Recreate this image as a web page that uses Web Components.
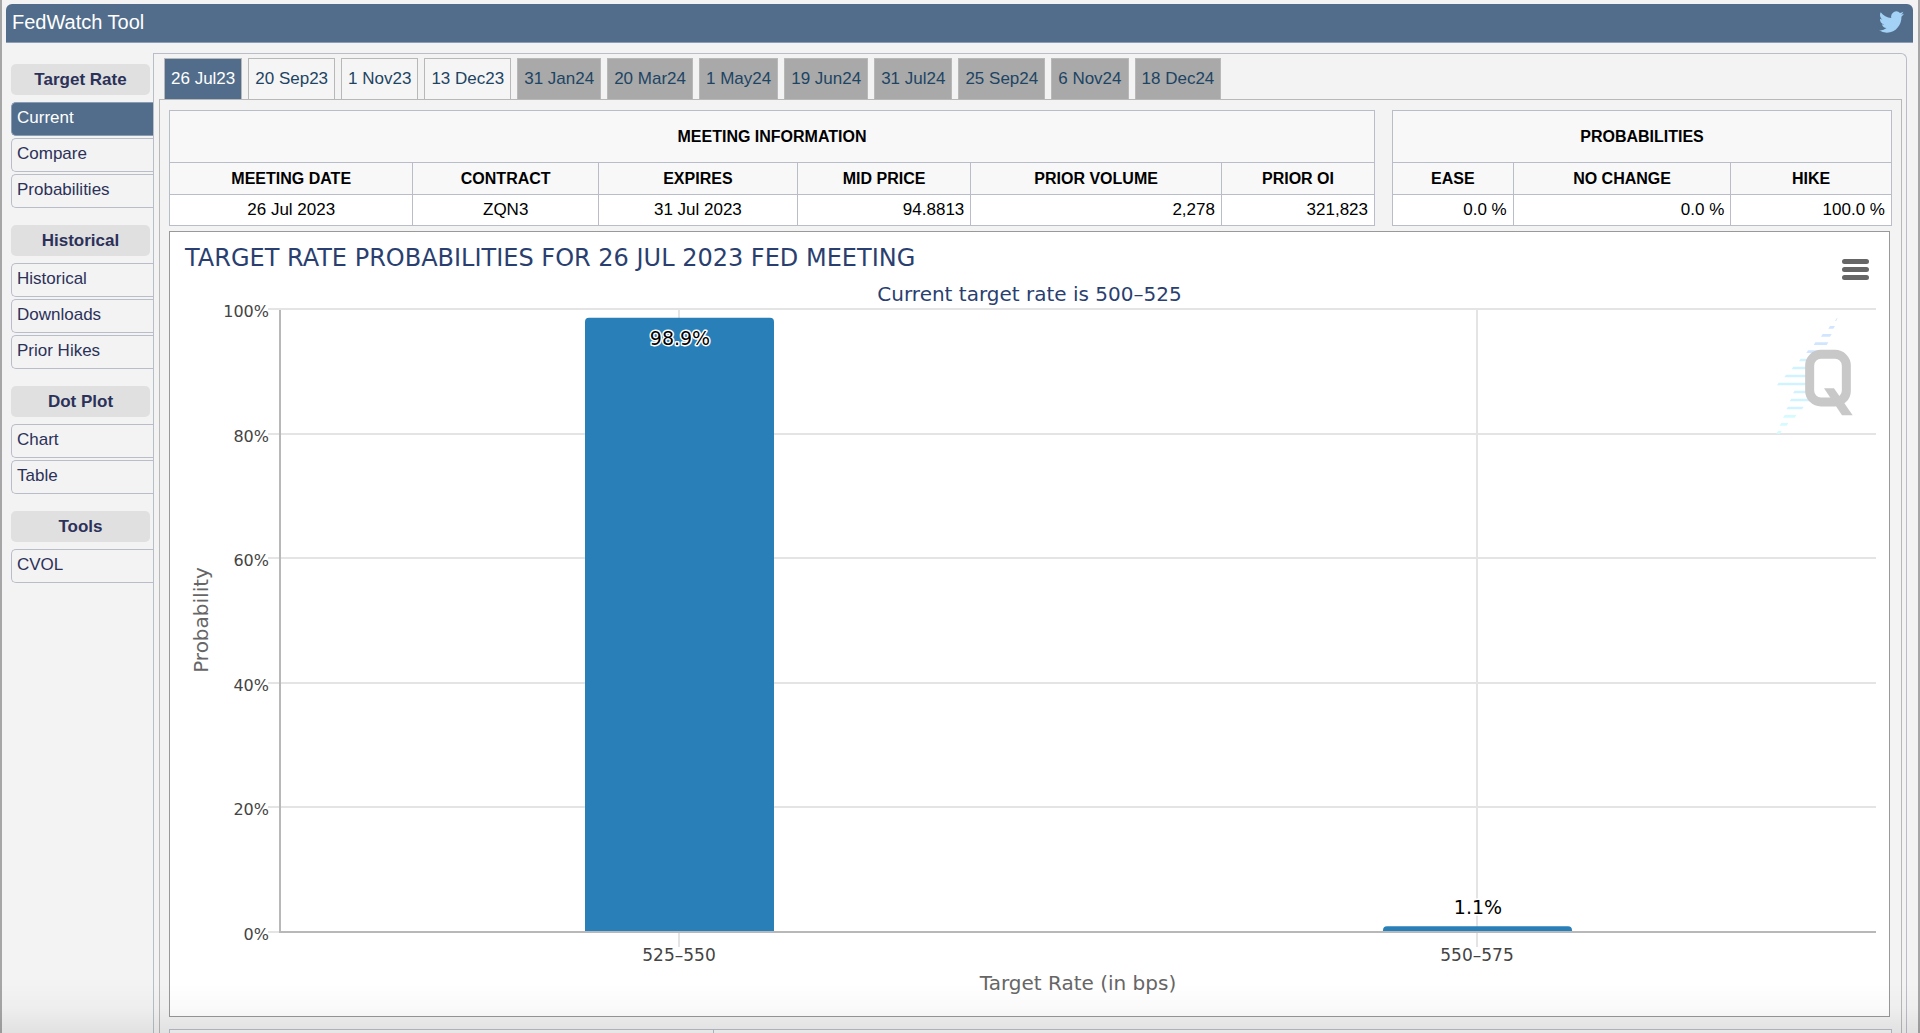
<!DOCTYPE html>
<html lang="en">
<head>
<meta charset="utf-8">
<title>FedWatch Tool</title>
<style>
  html { scrollbar-width: none; }
  body {
    margin: 0;
    background: #f3f3f3;
    font-family: "Liberation Sans", Arial, sans-serif;
    font-size: 17px;
    line-height: 20px;
    --accent: #516d8b;
    --line: #b9bdca;
    --frame: #b8b8b8;
  }
</style>
</head>
<body>
<fed-watch></fed-watch>

<script>
class BaseElement extends HTMLElement {
  connectedCallback() {
    if (this.shadowRoot) return;
    this.attachShadow({ mode: "open" }).innerHTML = this.render();
  }
}

customElements.define("app-header", class extends BaseElement {
  render() {
    return `<style>
      :host { display: flex; justify-content: space-between; align-items: flex-start; height: 38px;
        padding: 0 9px 0 6px; background: var(--accent); color: #fff;
        border-bottom: 1px solid #8d9db8; border-radius: 6px 6px 0 0; }
      h1 { margin: 0; padding-top: 6px; font-size: 20px; line-height: 24px; font-weight: 400; }
      a { display: block; padding-top: 7px; }
      svg { display: block; width: 25px; height: 22px; fill: #a4d2f6; }
    </style>
    <h1><slot></slot></h1>
    <a href="#" aria-label="Twitter"><svg viewBox="0 0 24 20" preserveAspectRatio="none"><path d="M23.95 2.57a10 10 0 0 1-2.82.77 4.96 4.96 0 0 0 2.16-2.72c-.95.55-2 .95-3.13 1.18a4.92 4.92 0 0 0-8.38 4.48C7.69 6.1 4.07 4.13 1.64 1.16a4.82 4.82 0 0 0-.67 2.48c0 1.71.87 3.21 2.19 4.1a4.9 4.9 0 0 1-2.23-.62v.06a4.92 4.92 0 0 0 3.95 4.83 5 5 0 0 1-2.21.08 4.94 4.94 0 0 0 4.6 3.42A9.87 9.87 0 0 1 0 17.54a13.99 13.99 0 0 0 7.55 2.21c9.05 0 14-7.5 14-13.98 0-.21 0-.42-.02-.63a9.94 9.94 0 0 0 2.46-2.55z"/></svg></a>`;
  }
});

customElements.define("side-group", class extends BaseElement {
  render() {
    return `<style>
      :host { display: flex; flex-direction: column; gap: 2px; padding-bottom: 17px; }
      h2 { margin: 0 3px 5px 0; font-size: 17px; line-height: 31px; height: 31px; text-align: center;
        color: #2c3159; background: #e0e0e0; border-radius: 5px; }
    </style><h2>${this.getAttribute("heading")}</h2><slot></slot>`;
  }
});

customElements.define("side-link", class extends BaseElement {
  render() {
    return `<style>
      :host { display: block; }
      a { display: block; height: 32px; line-height: 30px; padding-left: 5px; color: #2c3159; text-decoration: none;
        border: 1px solid var(--line); border-right: 0; border-radius: 5px 0 0 5px; }
      :host([current]) a { background: var(--accent); color: #fff; border-color: #8b9bb4; margin-right: -1px; }
    </style><a href="#"><slot></slot></a>`;
  }
});

customElements.define("meeting-tab", class extends BaseElement {
  render() {
    return `<style>
      :host { display: block; }
      button { display: block; height: 41px; margin: 0; padding: 0 6px; font: inherit; color: #1d4463;
        background: #f5f5f5; border: 1px solid var(--frame); border-bottom: 0; border-radius: 0; white-space: nowrap; }
      :host([far]) button { background: #a9a9a9; }
      :host([current]) button { background: var(--accent); color: #fff; }
    </style><button type="button"><slot></slot></button>`;
  }
});

customElements.define("data-table", class extends BaseElement {
  render() {
    const cols = JSON.parse(this.getAttribute("columns"));
    return `<style>
      :host { display: block; min-width: 0; }
      table { width: 100%; table-layout: fixed; border-collapse: collapse; color: #000; background: #fff; }
      th, td { border: 1px solid var(--line); padding: 0 6px; height: 31px; line-height: 20px; }
      td { height: 30px; }
      th { background: #f8f8f8; font-size: 16px; }
      .top th { height: 51px; }
      .center { text-align: center; } .right { text-align: right; }
    </style>
    <table>
      <colgroup>${cols.map(c => `<col style="width:${c.w}%">`).join("")}</colgroup>
      <thead>
        <tr class="top"><th colspan="${cols.length}">${this.getAttribute("heading")}</th></tr>
        <tr>${cols.map(c => `<th>${c.h}</th>`).join("")}</tr>
      </thead>
      <tbody><tr>${cols.map(c => `<td class="${c.a}">${c.v}</td>`).join("")}</tr></tbody>
    </table>`;
  }
});

customElements.define("rate-chart", class extends BaseElement {
  render() {
    const W = 1719, H = 784, L = 110, R = 1706, T = 77, B = 700;
    const data = [["525–550", 98.9], ["550–575", 1.1]];
    const step = (R - L) / data.length, bar = 190;
    const y = v => Math.round(B - (B - T) * v / 100);
    const grid = [0, 20, 40, 60, 80, 100].map(v =>
      `<path class="grid" d="M${L - 12} ${y(v)}H${R}"/><text class="pct" x="${L - 11}" y="${y(v) + 8}" text-anchor="end">${v}%</text>`).join("");
    const mid = i => L + step * (i + 0.5);
    const columns = data.map(([name, v], i) => {
      const x = mid(i), top = B - (B - T) * v / 100 + (v > 50 ? 2 : 1);
      const l = x - bar / 2 + 1, r = x + bar / 2;
      return `<path class="grid" d="M${x} ${T}V${B + 15}"/>
        <path class="bar" d="M${l} ${B}V${top + 4}q0 -4 4 -4H${r - 4}q4 0 4 4V${B}z"/>
        <text class="tick" x="${x}" y="${B + 29}" text-anchor="middle">${name}</text>
        <text class="value" x="${x + 1}" y="${v > 50 ? top + 27 : top - 12}" text-anchor="middle">${v}%</text>`;
    }).join("");
    const rays = [[408,414,269],[388,406,292],[366,396,316],[344,386,341],[322,372,365],[300,340,390],[278,330,414],
      [256,330,438],[234,330,462],[282,330,486],[272,336,510],[262,312,534],[252,290,559],[242,266,583],[232,246,607]]
      .map(([a, b, c], i) => `<path d="M${a} ${c + 4}l5 -8H${b + 2}l-5 8z" fill="${i < 5 ? "#d2e5ff" : i < 12 ? "#d0f3ff" : "#d4fbff"}"/>`).join("");
    return `<style>
      :host { display: block; background: #fff; border: 1px solid #999; }
      svg { display: block; width: 100%; height: auto; font-family: "DejaVu Sans", "Lucida Grande", sans-serif; }
      .grid { stroke: #e4e4e4; stroke-width: 2; fill: none; }
      .axis { stroke: #b8b8b8; stroke-width: 2; fill: none; }
      .bar { fill: #2980b9; }
      .tick { font-size: 17px; fill: #444; }
      .pct { font-size: 16px; fill: #444; }
      .value { font-size: 19px; fill: #000; stroke: #fff; stroke-width: 3px; stroke-linejoin: round; paint-order: stroke; }
      .title { font-size: 24px; fill: #2a3f70; }
      .sub { font-size: 20px; fill: #2a3f70; }
      .name { font-size: 20px; fill: #666; }
      .menu { stroke: #666; stroke-width: 5; stroke-linecap: round; }
    </style>
    <svg viewBox="0 0 ${W} ${H}" role="img" aria-label="Target rate probabilities">
      ${grid}
      <g transform="translate(1529 -2) scale(0.333333)">${rays}
        <rect x="332" y="373" width="110" height="143" rx="34" fill="none" stroke="#c8c8c8" stroke-width="27"/>
        <path d="M375 475H405L461 556H429z" fill="#c8c8c8"/></g>
      ${columns}
      <path class="axis" d="M${L} ${T + 1}V${B}H${R}"/>
      <text class="title" x="15" y="34">TARGET RATE PROBABILITIES FOR 26 JUL 2023 FED MEETING</text>
      <text class="sub" x="${W / 2}" y="69" text-anchor="middle">Current target rate is 500–525</text>
      <text class="name" x="${(L + R) / 2}" y="758" text-anchor="middle">Target Rate (in bps)</text>
      <text class="name" transform="translate(38 388) rotate(-90)" text-anchor="middle">Probability</text>
      <path class="menu" d="M1674.500 29.500H1696.500M1674.500 37.500H1696.500M1674.500 45.500H1696.500"/>
    </svg>`;
  }
});

customElements.define("fed-watch", class extends BaseElement {
  render() {
    const info = [
      { h: "MEETING DATE", v: "26 Jul 2023", a: "center", w: 20.2 }, { h: "CONTRACT", v: "ZQN3", a: "center", w: 15.4 },
      { h: "EXPIRES", v: "31 Jul 2023", a: "center", w: 16.5 }, { h: "MID PRICE", v: "94.8813", a: "right", w: 14.4 },
      { h: "PRIOR VOLUME", v: "2,278", a: "right", w: 20.8 }, { h: "PRIOR OI", v: "321,823", a: "right", w: 12.7 }];
    const prob = [
      { h: "EASE", v: "0.0 %", a: "right", w: 24.2 }, { h: "NO CHANGE", v: "0.0 %", a: "right", w: 43.6 },
      { h: "HIKE", v: "100.0 %", a: "right", w: 32.2 }];
    const near = ["20 Sep23", "1 Nov23", "13 Dec23"];
    const far = ["31 Jan24", "20 Mar24", "1 May24", "19 Jun24", "31 Jul24", "25 Sep24", "6 Nov24", "18 Dec24"];
    return `<style>
      :host { display: block; box-sizing: border-box; min-height: 100vh; padding: 4px 5px 0 4px; border: solid #a6a6a6; border-width: 0 2px; }
      .body { display: flex; padding: 10px 6px 0 5px; }
      nav { flex: none; width: 142px; padding-top: 11px; }
      main { flex: 1; min-width: 0; padding: 4px 4px 0 5px; border: 1px solid var(--line); border-bottom: 0; border-top-right-radius: 6px; }
      .tabs { display: flex; gap: 6px; padding-left: 5px; }
      .panel { display: flex; flex-direction: column; border: 1px solid var(--frame); border-bottom: 0; padding: 10px 9px 0; }
      .tables { display: grid; grid-template-columns: 1206fr 500fr; gap: 17px; }
      rate-chart { margin: 5px 2px 12px 0; }
      .next { width: 100%; border-collapse: collapse; table-layout: fixed; background: #f8f8f8; }
      .next td { border: 1px solid var(--line); height: 30px; padding: 0; }
      .fade { position: fixed; inset: auto 0 0 0; height: 50px; pointer-events: none; background: linear-gradient(transparent, rgba(0,0,0,.02) 50%, rgba(0,0,0,.07)); }
    </style>
    <app-header>FedWatch Tool</app-header>
    <div class="body">
      <nav>
        <side-group heading="Target Rate"><side-link current>Current</side-link><side-link>Compare</side-link><side-link>Probabilities</side-link></side-group>
        <side-group heading="Historical"><side-link>Historical</side-link><side-link>Downloads</side-link><side-link>Prior Hikes</side-link></side-group>
        <side-group heading="Dot Plot"><side-link>Chart</side-link><side-link>Table</side-link></side-group>
        <side-group heading="Tools"><side-link>CVOL</side-link></side-group>
      </nav>
      <main>
        <div class="tabs"><meeting-tab current>26 Jul23</meeting-tab>${near.map(t => `<meeting-tab>${t}</meeting-tab>`).join("")}${far.map(t => `<meeting-tab far>${t}</meeting-tab>`).join("")}</div>
        <div class="panel">
          <div class="tables">
            <data-table heading="MEETING INFORMATION" columns='${JSON.stringify(info)}'></data-table>
            <data-table heading="PROBABILITIES" columns='${JSON.stringify(prob)}'></data-table>
          </div>
          <rate-chart></rate-chart>
          <table class="next"><colgroup><col style="width:31.6%"><col></colgroup><tr><td></td><td></td></tr></table>
        </div>
      </main>
    </div>
    <div class="fade"></div>`;
  }
});
</script>
</body>
</html>
